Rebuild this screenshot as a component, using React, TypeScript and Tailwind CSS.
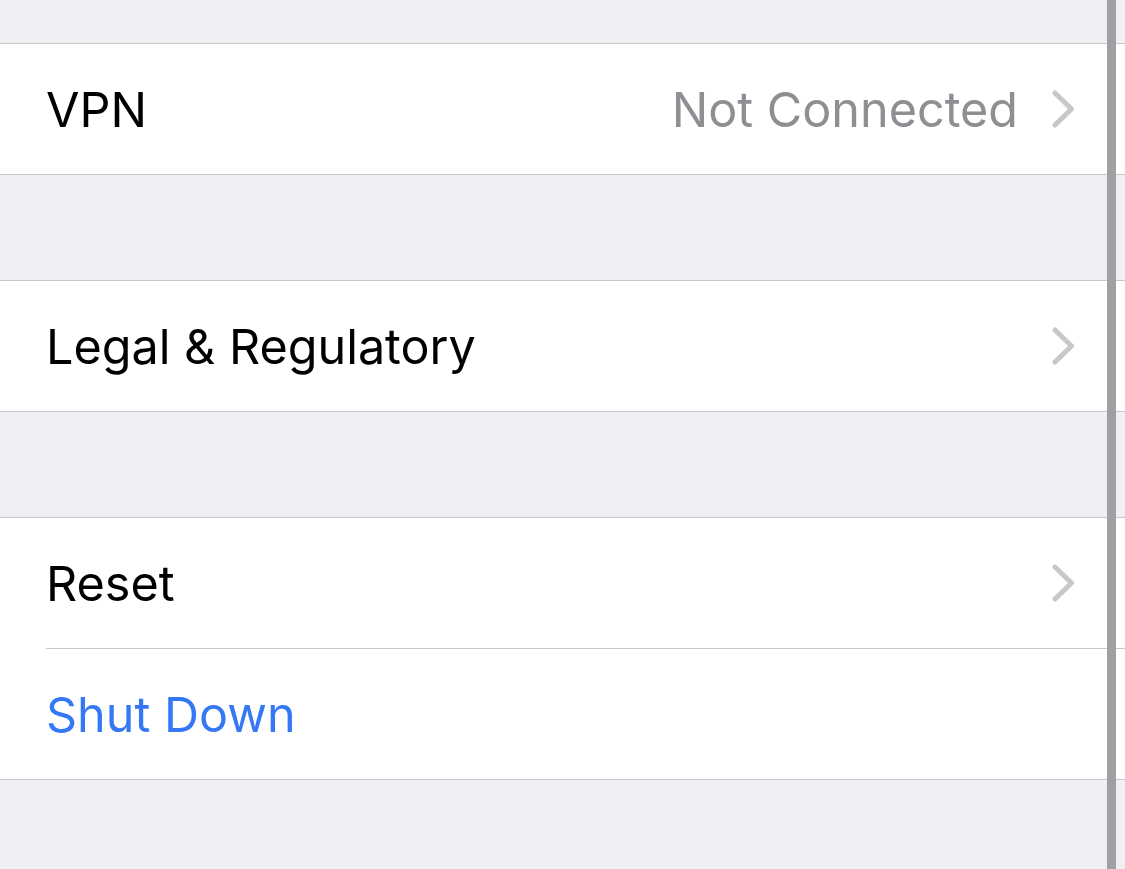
import React from "react";

function Chevron() {
  return (
    <svg width="23" height="38" viewBox="0 0 23 38" className="shrink-0">
      <polyline
        points="3,3 19.5,19 3,35"
        fill="none"
        stroke="#c7c7cc"
        strokeWidth="5"
        strokeLinecap="round"
        strokeLinejoin="round"
      />
    </svg>
  );
}

function Row({
  label,
  value,
  chevron = true,
  blue = false,
}: {
  label: string;
  value?: string;
  chevron?: boolean;
  blue?: boolean;
}) {
  return (
    <div className="flex h-[130px] items-center pl-[46px] pr-[50px]">
      <span className={`flex-1 pt-[3px] ${blue ? "text-[#3478f6]" : "text-black"}`}>{label}</span>
      {value && <span className="mr-[34px] pt-[3px] text-[#8e8e93]">{value}</span>}
      {chevron && <Chevron />}
    </div>
  );
}

export default function App() {
  return (
    <div
      className="relative h-[869px] w-full overflow-hidden bg-[#efeff4] text-[48.5px] leading-none"
      style={{ fontFamily: "Inter, 'Noto Sans', sans-serif" }}
    >
      <div className="h-[43px]" />
      <div className="border-y border-[#c8c7cc] bg-white">
        <Row label="VPN" value="Not Connected" />
      </div>
      <div className="h-[105px]" />
      <div className="border-y border-[#c8c7cc] bg-white">
        <Row label="Legal & Regulatory" />
      </div>
      <div className="h-[105px]" />
      <div className="border-y border-[#c8c7cc] bg-white">
        <Row label="Reset" />
        <div className="ml-[46px] h-px bg-[#c8c7cc]" />
        <Row label="Shut Down" chevron={false} blue />
      </div>

      {/* scroll indicator */}
      <div className="absolute top-0 bottom-0 left-[1107px] w-[9px] bg-[#a0a0a2]" />
    </div>
  );
}
